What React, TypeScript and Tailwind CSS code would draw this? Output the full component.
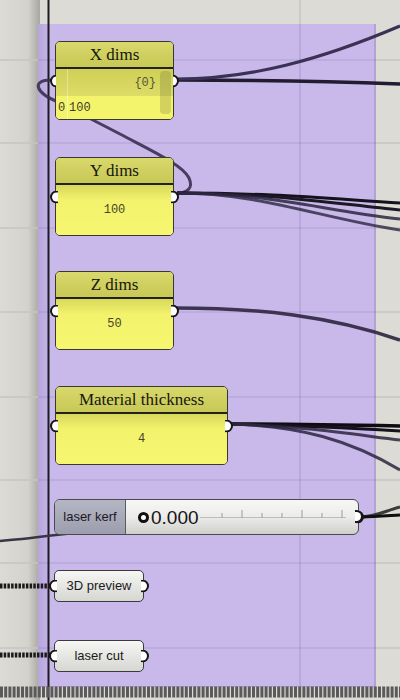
import React from "react";

const serif = { fontFamily: '"Liberation Serif", "Times New Roman", serif' };
const mono = { fontFamily: '"Liberation Mono", "DejaVu Sans Mono", monospace' };
const sans = { fontFamily: '"Liberation Sans", Arial, sans-serif' };

function Port({ side }: { side: "l" | "r" }) {
  return (
    <div
      className={
        "absolute top-1/2 -translate-y-1/2 w-[8px] h-[13px] bg-white border-[2.5px] border-[#161616] " +
        (side === "l" ? "-left-[5px] rounded-l-full border-r-0" : "-right-[5px] rounded-r-full border-l-0")
      }
    />
  );
}

function NodeFrame({ children, ports = true }: { children: React.ReactNode; ports?: boolean }) {
  return (
    <div className="relative w-full h-full">
      {ports && <Port side="l" />}
      <Port side="r" />
      {children}
    </div>
  );
}

function Title({ text }: { text: string }) {
  return (
    <div
      className="h-[27px] flex items-center justify-center text-[17px] text-[#16160e] bg-gradient-to-b from-[#d8d86c] to-[#c8c856] border-b-[2px] border-[#22221a]"
      style={serif}
    >
      {text}
    </div>
  );
}

function Panel({ title, value, x, y, w }: { title: string; value: string; x: number; y: number; w: number }) {
  return (
    <div className="absolute" style={{ left: x, top: y, width: w, height: 79 }}>
      <NodeFrame>
        <div className="w-full h-full rounded-[5px] border border-[#38382c] overflow-hidden flex flex-col">
          <Title text={title} />
          <div className="flex-1 flex items-center justify-center bg-gradient-to-b from-[#d8d85c] via-[#f2f26c] via-30% to-[#f6f670]">
            <span className="text-[12px] text-[#45452c]" style={mono}>
              {value}
            </span>
          </div>
        </div>
      </NodeFrame>
    </div>
  );
}

function XDims() {
  return (
    <div className="absolute" style={{ left: 55, top: 41, width: 119, height: 79 }}>
      <NodeFrame>
        <div className="w-full h-full rounded-[5px] border border-[#38382c] overflow-hidden flex flex-col">
          <Title text="X dims" />
          <div className="relative flex-1 flex flex-col">
            <div className="h-[27px] bg-gradient-to-b from-[#d0d058] to-[#dcdc66] flex items-center justify-end pr-[17px]">
              <span className="text-[12px] text-[#55553a]" style={mono}>
                {"{0}"}
              </span>
            </div>
            <div className="flex-1 bg-[#f4f46c] flex items-center pl-[2px] gap-[1px]">
              <span className="text-[12px] text-[#3e3e28] w-[10px]" style={mono}>
                0
              </span>
              <span className="text-[12px] text-[#3e3e28]" style={mono}>
                100
              </span>
            </div>
            <div className="absolute left-[11px] top-0 bottom-0 w-px bg-[rgba(255,255,255,0.35)]" />
            <div className="absolute right-[2px] top-[2px] bottom-[5px] w-[11px] rounded-[4px] bg-[rgba(90,90,40,0.22)]" />
          </div>
        </div>
      </NodeFrame>
    </div>
  );
}

function Button({ label, x, y }: { label: string; x: number; y: number }) {
  return (
    <div className="absolute" style={{ left: x, top: y, width: 90, height: 32 }}>
      <NodeFrame>
        <div
          className="w-full h-full rounded-[5px] border border-[#3a3a3a] bg-gradient-to-b from-[#f6f6f4] to-[#d6d6d2] flex items-center justify-center text-[13px] text-[#1a1a1a]"
          style={sans}
        >
          {label}
        </div>
      </NodeFrame>
    </div>
  );
}

function Slider() {
  const ticks = [222, 242, 262, 282, 302, 322, 342];
  return (
    <div className="absolute" style={{ left: 54, top: 499, width: 305, height: 36 }}>
      <NodeFrame ports={false}>
        <div className="w-full h-full rounded-[6px] border border-[#4a4a4a] bg-gradient-to-b from-[#f7f7f6] via-[#ececea] to-[#cfcfcc] flex items-stretch overflow-hidden">
          <div
            className="w-[71px] rounded-l-[5px] bg-gradient-to-b from-[#b4b6c4] to-[#9c9eae] flex items-center justify-center text-[13px] text-[#1a1a1e] border-r border-[#5a5a62]"
            style={sans}
          >
            laser kerf
          </div>
          <div className="flex-1 flex items-center pl-[12px] gap-[2px]">
            <div className="w-[11px] h-[11px] rounded-full border-[3px] border-[#111] bg-white" />
            <span className="text-[19px] text-[#151515] leading-none" style={sans}>
              0.000
            </span>
          </div>
        </div>
        <svg className="absolute left-0 top-0" width="305" height="36" viewBox="54 499 305 36">
          <line x1="200" y1="517.5" x2="346" y2="517.5" stroke="#bcbcb8" strokeWidth="1" />
          {ticks.map((t, i) => (
            <line
              key={t}
              x1={t}
              x2={t}
              y1={i === 1 || i === 4 || i === 6 ? 510 : 513}
              y2="518"
              stroke="#9c9c98"
              strokeWidth="1"
            />
          ))}
        </svg>
      </NodeFrame>
    </div>
  );
}

export default function App() {
  const gridH = [60, 143, 228, 312, 397, 480, 563, 648];
  const wire = "#2c2640";
  return (
    <div className="relative w-[400px] h-[700px] overflow-hidden bg-[#dddbd5]">
      {/* left shaded band */}
      <div className="absolute left-0 top-0 h-[700px] w-[40px] bg-gradient-to-r from-[#dddbd5] via-[#d4d2cc] via-70% to-[#a8a6a0]" />
      {/* grid under group */}
      <svg className="absolute inset-0" width="400" height="700">
        {gridH.map((y) => (
          <line key={y} x1="0" x2="400" y1={y} y2={y} stroke="#c6c4be" strokeWidth="1.5" />
        ))}
        <line x1="300" x2="300" y1="0" y2="700" stroke="#c6c4be" strokeWidth="1.5" />
      </svg>
      {/* purple group */}
      <div className="absolute left-[38px] top-[24px] w-[338px] h-[663px] bg-[#c9b9eb] border-r-2 border-b border-[#b2a2d6]" />
      <div className="absolute left-[38px] top-[24px] w-[11px] h-[663px] bg-gradient-to-r from-[rgba(90,70,140,0.16)] to-[rgba(90,70,140,0.05)]" />
      {/* grid over group (faint) */}
      <svg className="absolute inset-0" width="400" height="700">
        {gridH.map((y) => (
          <line key={y} x1="38" x2="376" y1={y} y2={y} stroke="rgba(120,100,160,0.2)" strokeWidth="1.5" />
        ))}
        <line x1="300" x2="300" y1="24" y2="687" stroke="rgba(120,100,160,0.25)" strokeWidth="1.5" />
      </svg>

      {/* wires */}
      <svg className="absolute inset-0" width="400" height="700">
        <line x1="48.5" x2="48.5" y1="0" y2="700" stroke="#1c1a22" strokeWidth="2" />
        <path d="M176 80 C 260 80, 320 81, 400 84" stroke="#221c30" strokeWidth="3.5" fill="none" />
        <path d="M176 79 C 250 79, 320 60, 400 26" stroke="#3a3254" strokeWidth="3" fill="none" />
        <path
          d="M51 80 C 32 80, 34 92, 58 102 L 120 134 C 150 150, 183 165, 189 178 C 194 189, 186 193, 177 193"
          stroke="#3a3052"
          strokeWidth="3"
          fill="none"
          opacity="0.9"
        />
        <path d="M177 193 C 270 193, 320 198, 400 203" stroke="#15121c" strokeWidth="3" fill="none" />
        <path d="M177 193 C 270 193, 330 203, 400 210" stroke="#1c1826" strokeWidth="3" fill="none" />
        <path d="M177 193 C 270 193, 320 210, 400 219" stroke={wire} strokeWidth="3" fill="none" opacity="0.85" />
        <path d="M177 193 C 260 193, 320 218, 400 230" stroke={wire} strokeWidth="3" fill="none" opacity="0.8" />
        <path d="M176 308 C 260 308, 330 316, 400 340" stroke={wire} strokeWidth="3.5" fill="none" opacity="0.9" />
        <path d="M230 424 C 300 424, 350 425, 400 426" stroke="#0e0c12" strokeWidth="3.5" fill="none" />
        <path d="M230 424 C 300 425, 350 428, 400 431" stroke="#15121c" strokeWidth="3" fill="none" />
        <path d="M230 424 C 300 426, 350 434, 400 440" stroke={wire} strokeWidth="3" fill="none" opacity="0.85" />
        <path d="M230 424 C 300 426, 350 440, 400 470" stroke={wire} strokeWidth="3" fill="none" opacity="0.85" />
        <path d="M0 541 C 30 539, 60 534, 100 530" stroke="#3a3446" strokeWidth="2.5" fill="none" />
        <path d="M360 517 C 375 517, 385 511, 400 507" stroke="#3a3a3a" strokeWidth="3" fill="none" />
        <path d="M360 517 C 375 517, 385 516, 400 515" stroke="#0e0e0e" strokeWidth="3" fill="none" />
        <line x1="0" x2="51" y1="586" y2="586" stroke="#1a1a1a" strokeWidth="5" strokeDasharray="2.5 1.2" />
        <line x1="0" x2="51" y1="655" y2="655" stroke="#1a1a1a" strokeWidth="5" strokeDasharray="2.5 1.2" />
        <line x1="0" x2="400" y1="692" y2="692" stroke="#5a5a5c" strokeWidth="11" strokeDasharray="3 1.2" />
      </svg>

      <XDims />
      <Panel title="Y dims" value="100" x={55} y={157} w={119} />
      <Panel title="Z dims" value="50" x={55} y={271} w={119} />
      <Panel title="Material thickness" value="4" x={55} y={386} w={173} />
      <Slider />
      <div className="absolute left-[355px] top-[510px] w-[8px] h-[13px] bg-white border-[2.5px] border-l-0 border-[#161616] rounded-r-full" />
      <Button label="3D preview" x={54} y={570} />
      <Button label="laser cut" x={54} y={640} />
    </div>
  );
}
